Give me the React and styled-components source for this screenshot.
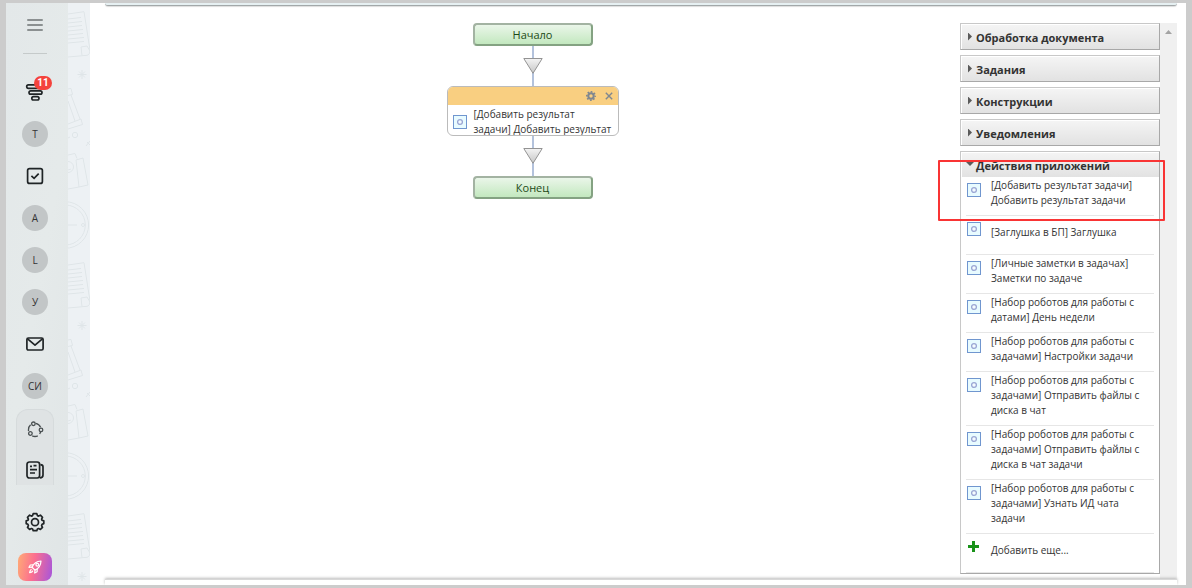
import React, { useState } from 'react'
import styled, { createGlobalStyle } from 'styled-components'

const letters = ['А', 'L', 'У']

const groups = ['Обработка документа', 'Задания', 'Конструкции', 'Уведомления']

const activities = [
    '[Добавить результат задачи] Добавить результат задачи',
    '[Заглушка в БП] Заглушка',
    '[Личные заметки в задачах] Заметки по задаче',
    '[Набор роботов для работы с датами] День недели',
    '[Набор роботов для работы с задачами] Настройки задачи',
    '[Набор роботов для работы с задачами] Отправить файлы с диска в чат',
    '[Набор роботов для работы с задачами] Отправить файлы с диска в чат задачи',
    '[Набор роботов для работы с задачами] Узнать ИД чата задачи',
]

function FunnelIcon() {
    return (
        <svg width="20" height="20" viewBox="0 0 20 20" fill="none" stroke="#1f2426" strokeWidth="1.7">
            <rect x="1.7" y="2.9" width="15.6" height="3.4" rx="1.7" />
            <rect x="4" y="8.8" width="13" height="3.4" rx="1.7" />
            <rect x="6.8" y="14.6" width="7.2" height="3.4" rx="1.7" />
        </svg>
    )
}

function CheckIcon() {
    return (
        <svg width="20" height="20" viewBox="0 0 20 20" fill="none" stroke="#1f2426" strokeWidth="1.7">
            <rect x="2.6" y="2.6" width="14.8" height="14.8" rx="2" />
            <path d="M6.4 9.8l2.7 2.6 4.6-4.8" />
        </svg>
    )
}

function MailIcon() {
    return (
        <svg width="20" height="20" viewBox="0 0 20 20" fill="none" stroke="#1f2426" strokeWidth="1.7" strokeLinejoin="round">
            <rect x="1.9" y="4" width="16.2" height="12" rx="1.4" />
            <path d="M2.6 4.8l7.4 6.4 7.4-6.4" />
        </svg>
    )
}

function RobotsIcon() {
    return (
        <svg width="18" height="18" viewBox="0 0 18 18" fill="none" stroke="#4a5052" strokeWidth="1.3">
            <path d="M4.6 3.8A6.4 6.4 0 0 0 2.5 8.500v1.600M9.700 2.300a6.600 6.600 0 0 1 4.900 4M6.200 14.900a7 7 0 0 0 5.600 0M13.600 12.900l1.200-2" />
            <circle cx="7.4" cy="2.8" r="1.8" />
            <circle cx="15" cy="8.9" r="1.8" />
            <circle cx="4.4" cy="12.5" r="1.8" />
        </svg>
    )
}

function NewsIcon() {
    return (
        <svg width="20" height="20" viewBox="0 0 20 20" fill="none" stroke="#1f2426" strokeWidth="1.7">
            <rect x="2" y="2" width="12.6" height="16" rx="2.4" />
            <path d="M15.4 4.6c1.8.1 2.6.9 2.6 2.2V15c0 1.8-1 2.9-3.2 2.9" />
            <path d="M5 6.3h2M8.5 5.7h3M5 9.6h7M5 13h5" />
        </svg>
    )
}

function GearIcon() {
    return (
        <svg width="20" height="20" viewBox="0 0 20 20" fill="none" stroke="#1f2426" strokeWidth="1.7" strokeLinejoin="round">
            <path d="M8.2 1.7h3.6l.6 1.9 1.2.5 1.8-.9 2.1 2.1-.9 1.8.5 1.2 1.7.6v2.7l-1.7.7-.5 1.3.9 1.7-2.1 2.1-1.8-.9-1.2.5-.6 1.7H8.2l-.6-1.7-1.2-.5-1.8.9-2.1-2.1.9-1.7-.5-1.3-1.7-.7V8.9l1.7-.6.5-1.2-.9-1.8 2.1-2.1 1.8.9 1.2-.5z" />
            <circle cx="10" cy="10.2" r="3.5" />
        </svg>
    )
}

function RocketIcon() {
    return (
        <svg width="16" height="16" viewBox="0 0 16 16" fill="none" stroke="#fff" strokeWidth="1.2" strokeLinejoin="round">
            <path d="M5 8.2C6.6 4.6 9.4 2.3 14 2c-.2 4.6-2.4 7.5-6 9.1z" />
            <path d="M6.2 5.8L3.3 6 2 8.4l3-.2M10.2 9.8l-.1 3L7.7 14l.3-2.9M4.6 10.4c-1.4.3-1.8 1.8-2 3.2 1.5-.1 2.9-.6 3.2-2" />
            <circle cx="10.3" cy="5.7" r="1.4" />
        </svg>
    )
}

function BlockIcon() {
    return (
        <svg width="14" height="14" viewBox="0 0 14 14" fill="none">
            <rect x="0.5" y="0.5" width="13" height="13" fill="#e8fbff" stroke="#7096cf" />
            <circle cx="7" cy="7" r="2.4" fill="#f4fbff" stroke="#9aa6d4" strokeWidth="1.3" />
        </svg>
    )
}

function Doodles() {
    return (
        <DoodleSvg aria-hidden="true">
            <defs>
                <pattern id="doodles" width="22" height="251" patternUnits="userSpaceOnUse">
                    <g fill="none" stroke="#dfe5e8" strokeWidth="1">
                        <path d="M0 11l16-2.3 6 38.3c0 3-1 5-3 5.3L0 54M13 44l6-1 3 5M13 44l1 8.5" />
                        <path d="M0 16l13-1.5M0 20l14-1.5M0 24l14-1.5M0 28l15-1.5M0 32l15-1.5M0 36l16-1.5M0 40l16-1.5" />
                        <path d="M14 67v9M9.5 71.5h9M11 68.5l6 6M17 68.5l-6 6" />
                        <path d="M0 86l3-.6 1.5 6L0 92.5M3 92l9 24M0 98l7 20M0 121l13-5 1.5 5.5L0 126" />
                        <circle cx="7" cy="132" r="2.7" />
                        <path d="M2 134l-2 1M22 138l-4 5M19 139l3 3" />
                        <path d="M0 152l7-1.5 2 5M8 157l7-2 5 27-9 2zM0 186l11-2M0 167l3-1" />
                        <circle cx="0" cy="164" r="5.5" />
                        <circle cx="-2.7" cy="222" r="23.3" />
                        <circle cx="-2.7" cy="222" r="20" />
                        <path d="M0 222h9" />
                        <circle cx="15" cy="222" r="1.5" />
                    </g>
                </pattern>
            </defs>
            <rect width="100%" height="100%" fill="url(#doodles)" />
        </DoodleSvg>
    )
}

function Sidebar() {
    return (
        <Side>
            <MenuButton aria-label="Меню">
                <MenuLine />
                <MenuLine />
                <MenuLine />
            </MenuButton>
            <Divider />
            <SideItem href="#feed" aria-label="CRM">
                <FunnelIcon />
                <Badge>11</Badge>
            </SideItem>
            <SideItem href="#t"><Circle>Т</Circle></SideItem>
            <SideItem href="#tasks" aria-label="Задачи"><CheckIcon /></SideItem>
            {letters.map((letter) => (
                <SideItem href="#app" key={letter}><Circle>{letter}</Circle></SideItem>
            ))}
            <SideItem href="#mail" aria-label="Почта"><MailIcon /></SideItem>
            <SideItem href="#si"><Circle>СИ</Circle></SideItem>
            <SideGroup>
                <SideItem href="#robots" aria-label="Роботы"><RobotsIcon /></SideItem>
                <SideItem href="#news" aria-label="Новости"><NewsIcon /></SideItem>
            </SideGroup>
            <SideItem href="#settings" aria-label="Настройки"><GearIcon /></SideItem>
            <Rocket aria-label="Тариф"><RocketIcon /></Rocket>
        </Side>
    )
}

function Arrow() {
    return (
        <svg width="20" height="40" viewBox="0 0 20 40">
            <defs>
                <linearGradient id="arrow" x1="0" y1="0" x2="0" y2="1">
                    <stop offset="0" stopColor="#f4f4f4" />
                    <stop offset="1" stopColor="#c6c6c6" />
                </linearGradient>
            </defs>
            <path d="M9 0h2v40H9z" fill="#b3c2dc" />
            <path d="M0.8 12.5h18.4L10 27.3z" fill="url(#arrow)" stroke="#939393" />
        </svg>
    )
}

function Diagram() {
    return (
        <Canvas>
            <Terminal>Начало</Terminal>
            <Arrow />
            <Card>
                <CardHead>
                    <CardButton aria-label="Настроить">
                        <svg width="10" height="10" viewBox="0 0 10 10" fill="none" stroke="#7f8790">
                            <circle cx="5" cy="5" r="2.7" strokeWidth="2" />
                            <circle cx="5" cy="5" r="4.2" strokeWidth="1.6" strokeDasharray="1.7 1.6" strokeDashoffset="0.85" />
                        </svg>
                    </CardButton>
                    <CardButton aria-label="Удалить">
                        <svg width="8" height="8" viewBox="0 0 8 8" stroke="#7f8790" strokeWidth="1.4">
                            <path d="M0.8 0.8l6.4 6.4M7.2 0.8L0.8 7.2" />
                        </svg>
                    </CardButton>
                </CardHead>
                <CardBody>
                    <CardIcon><BlockIcon /></CardIcon>
                    <CardText>[Добавить результат<br />задачи] Добавить результат</CardText>
                </CardBody>
            </Card>
            <Arrow />
            <Terminal>Конец</Terminal>
        </Canvas>
    )
}

function Catalog() {
    const [open, setOpen] = useState(true)
    return (
        <Groups>
            {groups.map((name) => (
                <Group key={name}>
                    <GroupTitle><RightMark />{name}</GroupTitle>
                </Group>
            ))}
            <Group>
                <GroupTitle aria-expanded={open} onClick={() => setOpen(!open)}>
                    {open ? <DownMark /> : <RightMark />}Действия приложений
                </GroupTitle>
                {open && (
                    <List>
                        {activities.map((text) => (
                            <Item key={text}>
                                <ItemIcon><BlockIcon /></ItemIcon>
                                <ItemText>{text}</ItemText>
                            </Item>
                        ))}
                        <Item>
                            <ItemIcon>
                                <svg width="14" height="14" viewBox="0 0 14 14">
                                    <path d="M5 1h3v4h4v3H8v4H5V8H1V5h4z" fill="#199219" />
                                </svg>
                            </ItemIcon>
                            <ItemText>Добавить еще...</ItemText>
                        </Item>
                    </List>
                )}
                <Highlight />
            </Group>
        </Groups>
    )
}

function App() {
    return (
        <Frame>
            <GlobalStyle />
            <Sidebar />
            <Strip><Doodles /></Strip>
            <Editor>
                <TopEdge />
                <Workspace>
                    <Diagram />
                    <Catalog />
                    <ScrollTrack><UpMark /></ScrollTrack>
                </Workspace>
                <BottomEdge />
            </Editor>
        </Frame>
    )
}

export default App

const GlobalStyle = createGlobalStyle`
    body {
        margin: 0;
        font-family: 'Open Sans', 'Noto Sans', sans-serif;
        color: #333;
    }
    *, *::before, *::after {
        box-sizing: border-box;
    }
    button {
        font-family: inherit;
        color: inherit;
        cursor: pointer;
    }
    svg {
        display: block;
        flex-shrink: 0;
    }
`
const Frame = styled.div`
    display: flex;
    min-height: 100vh;
    border: solid #ccc;
    border-width: 3px 6px;
    background: #fff;
`
const Side = styled.nav`
    display: flex;
    flex-direction: column;
    align-items: center;
    flex-shrink: 0;
    width: 62px;
    padding-right: 4px;
    background: linear-gradient(100deg, #e3e8e9, #e5eaea 50%, #e0e5e6);
`
const MenuButton = styled.button`
    display: flex;
    flex-direction: column;
    align-items: center;
    justify-content: center;
    gap: 3px;
    width: 42px;
    height: 44px;
    padding: 0;
    border: none;
    background: none;
`
const MenuLine = styled.span`
    width: 16px;
    height: 2px;
    border-radius: 1px;
    background: #8b9091;
`
const Divider = styled.span`
    width: 24px;
    height: 1px;
    margin: 6px 0 17px;
    background: #c5caca;
`
const SideItem = styled.a`
    position: relative;
    display: flex;
    align-items: center;
    justify-content: center;
    width: 38px;
    height: 42px;
    color: #333;
    text-decoration: none;
`
const Badge = styled.span`
    position: absolute;
    top: 5px;
    right: 2px;
    width: 18px;
    height: 14px;
    border-radius: 7px;
    background: #f4433c;
    color: #fff;
    font-family: Roboto, sans-serif;
    font-size: 10px;
    font-weight: 700;
    line-height: 14px;
    text-align: center;
`
const Circle = styled.span`
    width: 26px;
    height: 26px;
    border-radius: 50%;
    background: #c2c6c7;
    font-size: 10px;
    line-height: 26px;
    text-align: center;
`
const SideGroup = styled.div`
    width: 38px;
    height: 76px;
    margin: 2px 0 16px;
    border: 1px solid #d6dbdc;
    border-bottom: none;
    border-radius: 12px 12px 0 0;
    background: #dfe3e4;
    ${SideItem} {
        width: 36px;
        height: 40px;
    }
`
const Rocket = styled.button`
    display: flex;
    align-items: center;
    justify-content: center;
    width: 34px;
    height: 28px;
    margin-top: 10px;
    padding: 0;
    border: none;
    border-radius: 8px;
    background: linear-gradient(100deg, #ffac75, #fb6f8f 45%, #a555dc);
`
const Strip = styled.div`
    position: relative;
    flex-shrink: 0;
    width: 22px;
    background: #edf1f4;
`
const DoodleSvg = styled.svg`
    position: absolute;
    inset: 0;
    width: 100%;
    height: 100%;
`
const Editor = styled.main`
    display: flex;
    flex-direction: column;
    flex: 1;
    min-width: 0;
    padding: 0 9px 0 15px;
`
const TopEdge = styled.div`
    height: 3px;
    border-bottom: 1px solid #a2a8a9;
    border-radius: 0 0 4px 4px;
    background: #e6f0f2;
    box-shadow: 0 1px 1px #ddd;
`
const Workspace = styled.div`
    display: flex;
    flex: 1;
    padding-top: 17px;
`
const BottomEdge = styled.div`
    height: 6px;
    border-top: 1px solid #d8d8d8;
    background: #fff;
    box-shadow: 0 -1px 3px #bbb;
    clip-path: inset(-4px -3px 0 -3px);
`
const Canvas = styled.section`
    display: flex;
    flex-direction: column;
    align-items: center;
    flex: 1;
    min-width: 0;
`
const Terminal = styled.div`
    width: 120px;
    height: 23px;
    border: 2px solid;
    border-color: #a3b3a2 #84a282 #84a282 #a3b3a2;
    border-radius: 4px;
    background: linear-gradient(#eaf6e9, #c3e8bf);
    color: #1c4a17;
    font-size: 11px;
    line-height: 19px;
    text-align: center;
`
const Card = styled.article`
    width: 172px;
    height: 50px;
    overflow: hidden;
    border: 1px solid #bbb;
    border-radius: 6px;
    background: #fff;
`
const CardHead = styled.div`
    display: flex;
    align-items: center;
    justify-content: flex-end;
    gap: 9px;
    height: 18px;
    padding-right: 5px;
    background: #f9cf81;
`
const CardButton = styled.button`
    padding: 0;
    border: none;
    background: none;
`
const CardBody = styled.div`
    display: flex;
    padding: 2px 4px 0 5px;
`
const CardIcon = styled.span`
    margin-top: 8px;
`
const CardText = styled.span`
    flex: 1;
    padding-left: 7px;
    font-size: 10px;
    line-height: 15px;
    white-space: nowrap;
`
const Groups = styled.aside`
    display: flex;
    flex-direction: column;
    gap: 5px;
    flex-shrink: 0;
    width: 200px;
    padding-bottom: 5px;
`
const Group = styled.section`
    position: relative;
    border: 1px solid;
    border-color: #c8c8c8 #a8a8a8 #a8a8a8 #c8c8c8;
    background: #fff;
`
const GroupTitle = styled.button`
    display: flex;
    align-items: center;
    width: 100%;
    height: 25px;
    padding: 3px 0 0 7px;
    border: none;
    background: linear-gradient(#f5f5f5, #e2e2e2);
    box-shadow: inset 1px 1px 0 #fff;
    font-size: 11px;
    font-weight: 700;
    line-height: 20px;
    text-align: left;
`
const RightMark = styled.span`
    width: 4px;
    height: 8px;
    margin: 0 4px 3px 0;
    background: #5a5a5a;
    clip-path: polygon(0 0, 100% 50%, 0 100%);
`
const DownMark = styled.span`
    width: 8px;
    height: 4px;
    margin: 0 2px 4px -2px;
    background: #5a5a5a;
    clip-path: polygon(0 0, 100% 0, 50% 100%);
`
const List = styled.ul`
    margin: 0;
    padding: 0 5px;
    list-style: none;
`
const Item = styled.li`
    display: flex;
    min-height: 39px;
    padding: 1px 0 7px 1px;
    border-bottom: 1px solid #e6e6e6;
`
const ItemIcon = styled.span`
    margin-top: 5px;
`
const ItemText = styled.span`
    flex: 1;
    align-self: center;
    padding-left: 10px;
    font-size: 10px;
    line-height: 15px;
`
const Highlight = styled.div`
    position: absolute;
    top: 8px;
    right: -6px;
    left: -23px;
    height: 61px;
    border: 2px solid #f93434;
    border-radius: 1px;
    pointer-events: none;
`
const ScrollTrack = styled.div`
    flex-shrink: 0;
    width: 17px;
    padding: 7px 5px;
    background: #f0f0f0;
`
const UpMark = styled.span`
    display: block;
    width: 7px;
    height: 4px;
    background: #a3a3a3;
    clip-path: polygon(50% 0, 100% 100%, 0 100%);
`
